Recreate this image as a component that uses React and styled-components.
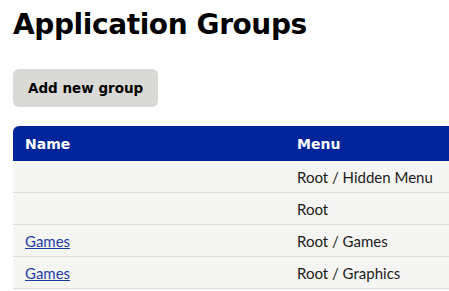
import React from 'react';
import styled, { createGlobalStyle } from 'styled-components';

const GlobalStyle = createGlobalStyle`
  html, body {
    margin: 0;
    padding: 0;
    background: #ffffff;
    overflow: hidden;
  }
  body {
    font-family: 'Lato', 'Liberation Sans', sans-serif;
    color: #1a1a1a;
  }
`;

const Page = styled.main`
  padding: 7px 0 0 13px;
  width: 460px;
`;

const Title = styled.h1`
  margin: 0;
  font-family: 'DejaVu Sans', sans-serif;
  font-size: 28px;
  font-weight: 700;
  line-height: 36px;
  letter-spacing: -0.4px;
  color: #000;
`;

const Button = styled.button`
  margin-top: 26px;
  display: block;
  height: 38px;
  padding: 0 15px;
  background: #d9d9d5;
  border: none;
  border-radius: 6px;
  font-family: 'DejaVu Sans', sans-serif;
  font-size: 13.5px;
  font-weight: 700;
  color: #000;
  cursor: pointer;
`;

const Table = styled.table`
  margin-top: 19px;
  border-collapse: separate;
  border-spacing: 0;
  width: 480px;
  table-layout: fixed;
`;

const HeadCell = styled.th`
  box-sizing: border-box;
  height: 35px;
  padding: 0 12px;
  text-align: left;
  background: #00259a;
  color: #fff;
  font-family: 'DejaVu Sans', sans-serif;
  font-size: 14px;
  font-weight: 700;
  width: ${({ $w }) => $w || 'auto'};
  &:first-child {
    border-top-left-radius: 6px;
  }
`;

const Cell = styled.td`
  height: 31px;
  padding: 0 12px;
  background: #f5f5f3;
  border-bottom: 1px solid #dcdcd9;
  font-size: 15px;
  color: #1c1c1c;
  white-space: nowrap;
`;

const GroupLink = styled.a`
  color: #1d3ca3;
  text-decoration: underline;
`;

const rows = [
  { name: '', menu: 'Root / Hidden Menu' },
  { name: '', menu: 'Root' },
  { name: 'Games', menu: 'Root / Games' },
  { name: 'Games', menu: 'Root / Graphics' },
];

export default function App() {
  return (
    <>
      <GlobalStyle />
      <Page>
        <Title>Application Groups</Title>
        <Button>Add new group</Button>
        <Table>
          <thead>
            <tr>
              <HeadCell $w="272px">Name</HeadCell>
              <HeadCell>Menu</HeadCell>
            </tr>
          </thead>
          <tbody>
            {rows.map((r, i) => (
              <tr key={i}>
                <Cell>{r.name && <GroupLink href="#">{r.name}</GroupLink>}</Cell>
                <Cell>{r.menu}</Cell>
              </tr>
            ))}
          </tbody>
        </Table>
      </Page>
    </>
  );
}
